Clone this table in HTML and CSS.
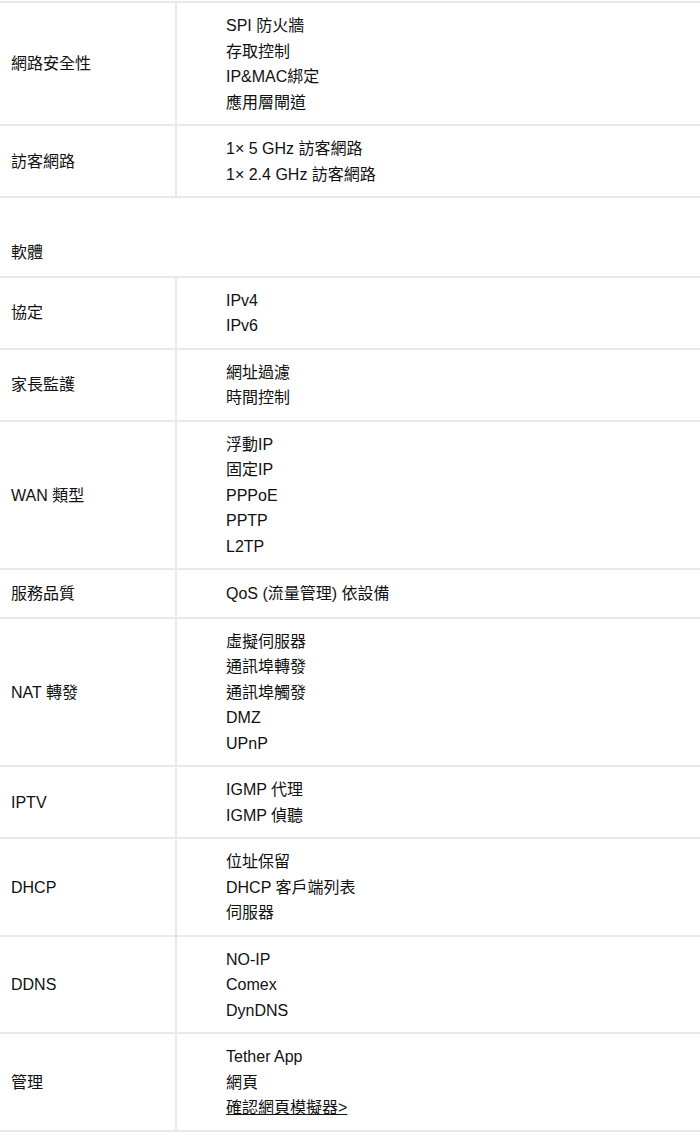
FILE: index.html
```html
<!DOCTYPE html>
<html lang="zh-Hant">
<head>
<meta charset="utf-8">
<title>規格</title>
<link rel="stylesheet" href="styles.css">
</head>
<body>
<table class="spec">
  <tbody>
    <tr>
      <td class="lbl">網路安全性</td>
      <td class="val"><div>SPI 防火牆</div><div>存取控制</div><div>IP&amp;MAC綁定</div><div>應用層閘道</div></td>
    </tr>
    <tr>
      <td class="lbl">訪客網路</td>
      <td class="val"><div>1× 5 GHz 訪客網路</div><div>1× 2.4 GHz 訪客網路</div></td>
    </tr>
    <tr class="section">
      <td colspan="2">軟體</td>
    </tr>
    <tr>
      <td class="lbl">協定</td>
      <td class="val"><div>IPv4</div><div>IPv6</div></td>
    </tr>
    <tr>
      <td class="lbl">家長監護</td>
      <td class="val"><div>網址過濾</div><div>時間控制</div></td>
    </tr>
    <tr>
      <td class="lbl">WAN 類型</td>
      <td class="val"><div>浮動IP</div><div>固定IP</div><div>PPPoE</div><div>PPTP</div><div>L2TP</div></td>
    </tr>
    <tr>
      <td class="lbl">服務品質</td>
      <td class="val single"><div>QoS (流量管理) 依設備</div></td>
    </tr>
    <tr>
      <td class="lbl">NAT 轉發</td>
      <td class="val"><div>虛擬伺服器</div><div>通訊埠轉發</div><div>通訊埠觸發</div><div>DMZ</div><div>UPnP</div></td>
    </tr>
    <tr>
      <td class="lbl">IPTV</td>
      <td class="val"><div>IGMP 代理</div><div>IGMP 偵聽</div></td>
    </tr>
    <tr>
      <td class="lbl">DHCP</td>
      <td class="val"><div>位址保留</div><div>DHCP 客戶端列表</div><div>伺服器</div></td>
    </tr>
    <tr>
      <td class="lbl">DDNS</td>
      <td class="val"><div>NO-IP</div><div>Comex</div><div>DynDNS</div></td>
    </tr>
    <tr>
      <td class="lbl">管理</td>
      <td class="val"><div>Tether App</div><div>網頁</div><div><a class="link" href="#">確認網頁模擬器&gt;</a></div></td>
    </tr>
  </tbody>
</table>
</body>
</html>
```

FILE: styles.css
```css
html, body {
  margin: 0;
  padding: 0;
  background: #ffffff;
}

body {
  padding-top: 1px;
  font-family: "Liberation Sans", Arial, "Noto Sans CJK TC", sans-serif;
  font-size: 16px;
  color: #111111;
}

.spec {
  width: 700px;
  border-collapse: collapse;
  border-spacing: 0;
}

.spec td {
  border-top: 2px solid #e9e9e9;
  border-bottom: 2px solid #e9e9e9;
  padding: 0;
  vertical-align: middle;
  line-height: 25.5px;
}

.spec .lbl {
  width: 164px;
  padding: 10px 0 9px 11px;
  border-right: 2px solid #e9e9e9;
}

.spec .val {
  padding: 10px 10px 9px 49px;
}

.spec .val.single {
  padding-top: 11px;
  padding-bottom: 10px;
}

.spec .section td {
  padding: 42px 11px 10px;
  border-right: none;
}

.link {
  color: #111111;
  text-decoration: underline;
}
```
